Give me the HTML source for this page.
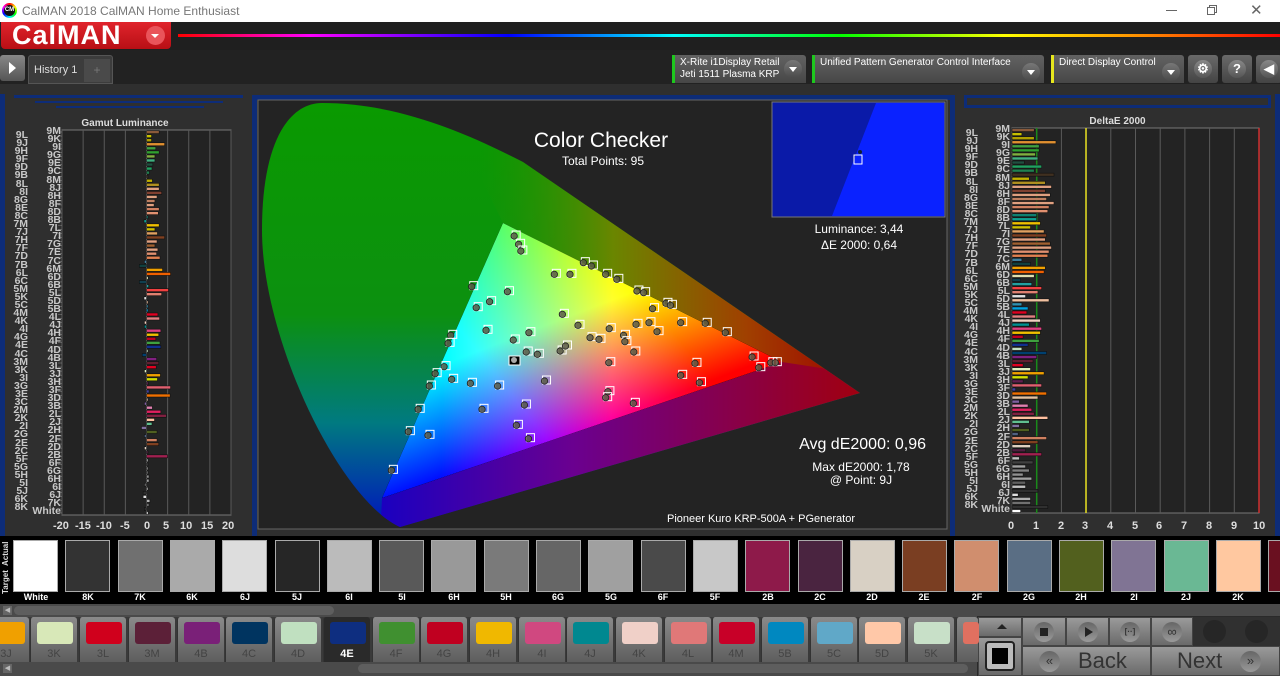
<!DOCTYPE html>
<html><head><meta charset="utf-8">
<style>
*{margin:0;padding:0;box-sizing:border-box}
body{width:1280px;height:676px;overflow:hidden;background:#2b2b2b;font-family:"Liberation Sans",sans-serif;position:relative}
.abs{position:absolute}
.dev{position:absolute;top:55px;height:28px;background:linear-gradient(#626262,#474747);border-radius:3px 3px 0 0;color:#fff;font-size:10px;line-height:12px;padding:2px 0 0 8px}
.dev .bar{position:absolute;left:0;top:0;bottom:0;width:3px}
.dd{position:absolute;right:4px;top:5px;width:18px;height:18px;border-radius:50%;background:linear-gradient(#777,#4a4a4a)}
.dd:after{content:"";position:absolute;left:5px;top:7px;border-left:4px solid transparent;border-right:4px solid transparent;border-top:5px solid #fff}
.ib{position:absolute;top:55px;width:30px;height:28px;background:linear-gradient(#6a6a6a,#444);border-radius:3px;color:#fff;font-weight:bold;text-align:center}
.ib i{position:absolute;left:6px;top:5px;width:18px;height:18px;border-radius:50%;background:linear-gradient(#888,#555);font-style:normal;font-size:13px;line-height:18px}
.lab{position:absolute;font-size:10.5px;font-weight:bold;color:#c8c8c8;line-height:8.1px;text-align:right;white-space:pre}
.sw{position:absolute;top:540px;width:45px;height:52px;border:1px solid #aaa}
.swl{position:absolute;top:592px;width:52px;text-align:center;color:#fff;font-size:9px;font-weight:bold}
.tab{position:absolute;top:617px;width:47px;height:45px;background:linear-gradient(#8a8a8a,#5e5e5e);border-radius:3px 3px 0 0;border-left:1px solid #333}
.tab b{position:absolute;left:6px;top:5px;width:36px;height:22px;border-radius:3px}
.tab span{position:absolute;left:0;right:0;top:31px;text-align:center;font-size:11px;color:#444}
.cb{position:absolute;background:linear-gradient(#9a9a9a,#6a6a6a);border:1px solid #444}
.cb i{position:absolute;left:50%;top:50%;width:20px;height:20px;margin:-10px 0 0 -10px;border-radius:50%;background:linear-gradient(#666,#9a9a9a)}
</style></head><body>
<!-- title bar -->
<div class="abs" style="left:0;top:0;width:1280px;height:22px;background:#fff"></div>
<div class="abs" style="left:2px;top:3px;width:15px;height:15px;border-radius:50%;background:conic-gradient(red,yellow,lime,cyan,blue,magenta,red)"></div>
<div class="abs" style="left:4px;top:5px;width:11px;height:11px;border-radius:50%;background:#111;color:#fff;font-size:6px;line-height:11px;text-align:center;font-weight:bold">CM</div>
<div class="abs" style="left:22px;top:4px;font-size:12px;color:#777">CalMAN 2018 CalMAN Home Enthusiast</div>
<div class="abs" style="left:1166px;top:10px;width:11px;height:1px;background:#666"></div>
<div class="abs" style="left:1209px;top:5px;width:8px;height:8px;border:1px solid #666"></div>
<div class="abs" style="left:1207px;top:7px;width:8px;height:8px;border:1px solid #666;background:#fff"></div>
<div class="abs" style="left:1250px;top:1px;font-size:15px;color:#666">✕</div>
<!-- header -->
<div class="abs" style="left:0;top:22px;width:1280px;height:28px;background:#1f1f1f"></div>
<div class="abs" style="left:1px;top:22px;width:170px;height:27px;background:linear-gradient(#e0242c,#b80f15);border-radius:0 0 4px 4px;color:#fff;font-size:27px;font-weight:bold;line-height:27px;padding-left:11px;letter-spacing:1px">CalMAN</div>
<div class="abs" style="left:146px;top:26px;width:19px;height:19px;border-radius:50%;background:#e9545a"></div>
<div class="abs" style="left:151px;top:34px;border-left:4px solid transparent;border-right:4px solid transparent;border-top:4px solid #fff"></div>
<div class="abs" style="left:178px;top:34px;width:1102px;height:3px;background:linear-gradient(90deg,#f00,#f0f 12%,#00f 30%,#0ff 45%,#0f0 60%,#ff0 75%,#f80 88%,#f00)"></div>
<div class="abs" style="left:0;top:50px;width:1280px;height:34px;background:#222"></div>
<div class="abs" style="left:0;top:55px;width:25px;height:26px;background:linear-gradient(#888,#555);border-radius:3px"></div>
<div class="abs" style="left:9px;top:62px;border-top:6px solid transparent;border-bottom:6px solid transparent;border-left:7px solid #fff"></div>
<div class="abs" style="left:28px;top:55px;width:85px;height:29px;background:#3c3c3c;border-radius:3px 3px 0 0;border:1px solid #555;color:#ddd;font-size:11px;padding:8px 0 0 5px">History 1</div>
<div class="abs" style="left:84px;top:59px;width:26px;height:23px;background:#4a4a4a;color:#777;font-size:12px;text-align:center;line-height:23px">+</div>
<div class="dev" style="left:672px;width:134px"><div class="bar" style="background:#1ec81e"></div>X-Rite i1Display Retail<br>Jeti 1511 Plasma KRP<div class="dd"></div></div>
<div class="dev" style="left:812px;width:232px"><div class="bar" style="background:#1ec81e"></div>Unified Pattern Generator Control Interface<div class="dd" style="top:8px"></div></div>
<div class="dev" style="left:1051px;width:133px"><div class="bar" style="background:#e6e61e"></div>Direct Display Control<div class="dd" style="top:8px"></div></div>
<div class="ib" style="left:1188px"><i>⚙</i></div>
<div class="ib" style="left:1222px"><i>?</i></div>
<div class="ib" style="left:1256px;width:26px"><i style="left:4px">◀</i></div>

<!-- main -->
<div class="abs" style="left:0;top:84px;width:1280px;height:452px;background:#2f2f2f"></div>
<div class="abs" style="left:0;top:94px;width:5px;height:442px;background:#0d2c78"></div>
<div class="abs" style="left:14px;top:95px;width:229px;height:3px;background:#0d2c78"></div>
<div class="abs" style="left:35px;top:101px;width:188px;height:2px;background:#0d2c78"></div>
<div class="abs" style="left:56px;top:106px;width:148px;height:2px;background:#0d2c78"></div>
<div class="abs" style="left:0;top:118px;width:240px;text-align:center;color:#ddd;font-size:10px;font-weight:bold;padding-left:10px">Gamut Luminance</div>
<div class="abs" style="left:1275px;top:94px;width:5px;height:442px;background:#0d2c78"></div>
<div class="abs" style="left:964px;top:95px;width:307px;height:13px;border:3px solid #0d2c78"></div>
<div class="abs" style="left:955px;top:116px;width:325px;text-align:center;color:#ddd;font-size:10px;font-weight:bold">DeltaE 2000</div>
<svg id="lc" class="abs" style="left:0;top:0" width="250" height="536"></svg>
<svg id="rc" class="abs" style="left:0;top:0" width="1280" height="536"></svg>

<div class="lab" style="left:0;top:127px;width:61px">9M
9K
9I
9G
9E
9C
8M
8J
8H
8F
8D
8B
7L
7I
7G
7E
7C
6M
6D
6B
5L
5D
5B
4L
4J
4H
4F
4D
4B
3L
3J
3H
3F
3D
3B
2L
2J
2H
2F
2D
2B
6F
6G
6H
6I
6J
7K
White</div>
<div class="lab" style="left:0;top:131px;width:28px">9L
9J
9H
9F
9D
9B
8L
8I
8G
8E
8C
7M
7J
7H
7F
7D
7B
6L
6C
5M
5K
5C
4M
4K
4I
4G
4E
4C
3M
3K
3I
3G
3E
3C
2M
2K
2I
2G
2E
2C
5F
5G
5H
5I
5J
6K
8K</div>
<div class="lab" style="left:955px;top:125px;width:55px">9M
9K
9I
9G
9E
9C
8M
8J
8H
8F
8D
8B
7L
7I
7G
7E
7C
6M
6D
6B
5L
5D
5B
4L
4J
4H
4F
4D
4B
3L
3J
3H
3F
3D
3B
2L
2J
2H
2F
2D
2B
6F
6G
6H
6I
6J
7K
White</div>
<div class="lab" style="left:955px;top:129px;width:23px">9L
9J
9H
9F
9D
9B
8L
8I
8G
8E
8C
7M
7J
7H
7F
7D
7B
6L
6C
5M
5K
5C
4M
4K
4I
4G
4E
4C
3M
3K
3I
3G
3E
3C
2M
2K
2I
2G
2E
2C
5F
5G
5H
5I
5J
6K
8K</div>
<div class="abs" style="left:50px;top:520px;width:200px;font-size:11px;color:#ddd;font-weight:bold;word-spacing:0">
<span class="abs" style="left:3px">-20</span><span class="abs" style="left:25px">-15</span><span class="abs" style="left:46px">-10</span><span class="abs" style="left:70px">-5</span><span class="abs" style="left:94px">0</span><span class="abs" style="left:113px">5</span><span class="abs" style="left:130px">10</span><span class="abs" style="left:151px">15</span><span class="abs" style="left:172px">20</span></div>
<div class="abs" style="left:1008px;top:520px;font-size:11px;color:#ddd;font-weight:bold">
<span class="abs" style="left:0">0</span><span class="abs" style="left:25px">1</span><span class="abs" style="left:50px">2</span><span class="abs" style="left:74px">3</span><span class="abs" style="left:99px">4</span><span class="abs" style="left:124px">5</span><span class="abs" style="left:148px">6</span><span class="abs" style="left:173px">7</span><span class="abs" style="left:198px">8</span><span class="abs" style="left:223px">9</span><span class="abs" style="left:245px">10</span></div>

<!-- center chart -->
<div class="abs" style="left:252px;top:95px;width:703px;height:441px;border:5px solid #0d2c78;border-bottom:none"></div>
<svg class="abs" style="left:0;top:0" width="1280" height="536">
<defs>
<clipPath id="loc"><path d="M860,393 L400,527 C340,500 262,340 262,230 C262,140 290,103 322,103 C400,103 470,135 523,162 Z"/></clipPath>
<linearGradient id="gv" x1="0" y1="100" x2="0" y2="530" gradientUnits="userSpaceOnUse"><stop offset="0" stop-color="#0a9a00"/><stop offset="0.5" stop-color="#0c9010"/><stop offset="0.75" stop-color="#007a80"/><stop offset="1" stop-color="#0010c0"/></linearGradient>
<linearGradient id="gr" x1="480" y1="0" x2="860" y2="0" gradientUnits="userSpaceOnUse"><stop offset="0" stop-color="#2a9000" stop-opacity="0"/><stop offset="0.35" stop-color="#6a8600"/><stop offset="0.7" stop-color="#a04000"/><stop offset="1" stop-color="#a00000"/></linearGradient>
<linearGradient id="gb" x1="380" y1="0" x2="860" y2="0" gradientUnits="userSpaceOnUse"><stop offset="0" stop-color="#1a00c0"/><stop offset="0.4" stop-color="#6a0090"/><stop offset="1" stop-color="#a00010"/></linearGradient>
<linearGradient id="t1" x1="503" y1="223" x2="582" y2="430" gradientUnits="userSpaceOnUse"><stop offset="0" stop-color="#00ff00"/><stop offset="0.5" stop-color="#00ff00"/><stop offset="1" stop-color="#000"/></linearGradient>
<linearGradient id="t2" x1="782" y1="362" x2="442" y2="360" gradientUnits="userSpaceOnUse"><stop offset="0" stop-color="#ff0000"/><stop offset="0.5" stop-color="#ff0000"/><stop offset="1" stop-color="#000"/></linearGradient>
<linearGradient id="t3" x1="382" y1="498" x2="642" y2="292" gradientUnits="userSpaceOnUse"><stop offset="0" stop-color="#0000ff"/><stop offset="0.5" stop-color="#0000ff"/><stop offset="1" stop-color="#000"/></linearGradient>
</defs>
<rect x="258" y="100" width="689" height="429" fill="#232323" stroke="#666" stroke-width="1"/>
<g clip-path="url(#loc)">
<rect x="250" y="90" width="700" height="450" fill="url(#gv)"/>
<polygon points="440,95 900,95 900,400 782,362 503,223" fill="url(#gr)"/>
<polygon points="382,498 782,362 900,380 900,540 380,540" fill="url(#gb)"/>
</g>
<g style="isolation:isolate">
<polygon points="503,223 782,362 382,498" fill="#000"/>
<polygon points="503,223 782,362 382,498" fill="url(#t1)" style="mix-blend-mode:screen"/>
<polygon points="503,223 782,362 382,498" fill="url(#t2)" style="mix-blend-mode:screen"/>
<polygon points="503,223 782,362 382,498" fill="url(#t3)" style="mix-blend-mode:screen"/>
</g>
<rect x="772" y="102" width="173" height="115" fill="#0a1aa8" stroke="#777"/>
<polygon points="876,103 944,103 944,216 832,216" fill="#0a22ff"/>
<rect x="854" y="155" width="8" height="9" fill="none" stroke="#fff"/>
<circle cx="860" cy="152" r="2" fill="#123"/>
<g id="pts"></g>
<text x="601" y="147" fill="#fff" font-size="21" text-anchor="middle" font-family="Liberation Sans">Color Checker</text>
<text x="603" y="165" fill="#fff" font-size="12" text-anchor="middle" font-family="Liberation Sans">Total Points: 95</text>
<text x="859" y="233" fill="#fff" font-size="12" text-anchor="middle" font-family="Liberation Sans">Luminance: 3,44</text>
<text x="859" y="249" fill="#fff" font-size="12" text-anchor="middle" font-family="Liberation Sans">ΔE 2000: 0,64</text>
<text x="926" y="449" fill="#fff" font-size="16" text-anchor="end" font-family="Liberation Sans">Avg dE2000: 0,96</text>
<text x="861" y="471" fill="#fff" font-size="12" text-anchor="middle" font-family="Liberation Sans">Max dE2000: 1,78</text>
<text x="861" y="484" fill="#fff" font-size="12" text-anchor="middle" font-family="Liberation Sans">@ Point: 9J</text>
<text x="761" y="522" fill="#fff" font-size="11" text-anchor="middle" font-family="Liberation Sans">Pioneer Kuro KRP-500A + PGenerator</text>
</svg>

<!-- swatch strip -->
<div class="abs" style="left:0;top:536px;width:1280px;height:68px;background:#000"></div>
<div class="abs" style="left:1px;top:538px;width:11px;height:56px;color:#ddd;font-size:8px;font-weight:bold;writing-mode:vertical-rl;transform:rotate(180deg);text-align:left">Target&nbsp; Actual</div>
<div id="sws"></div>
<div class="abs" style="left:0;top:604px;width:1280px;height:13px;background:#4a4a4a"></div>
<div class="abs" style="left:14px;top:606px;width:320px;height:9px;border-radius:5px;background:#5e5e5e"></div>
<div class="abs" style="left:3px;top:606px;width:9px;height:9px;background:#666;color:#bbb;font-size:7px;line-height:9px;text-align:center">◀</div>
<!-- tabs -->
<div class="abs" style="left:0;top:617px;width:978px;height:59px;background:#3a3a3a"></div>
<div class="abs" style="left:0;top:662px;width:978px;height:14px;background:#4a4a4a"></div>
<div class="abs" style="left:358px;top:664px;width:610px;height:9px;border-radius:5px;background:#5e5e5e"></div>
<div class="abs" style="left:3px;top:664px;width:9px;height:9px;background:#666;color:#bbb;font-size:7px;line-height:9px;text-align:center">◀</div>
<!-- controls -->
<div class="abs" style="left:977px;top:616px;width:303px;height:60px;background:#2a2a2a"></div>
<div class="cb" style="left:978px;top:617px;width:44px;height:20px"><div class="abs" style="left:18px;top:6px;border-left:5px solid transparent;border-right:5px solid transparent;border-bottom:5px solid #222"></div></div>
<div class="cb" style="left:978px;top:637px;width:44px;height:39px"><div class="abs" style="left:6px;top:3px;width:30px;height:30px;border:2px solid #222;border-radius:4px;background:#bbb"></div><div class="abs" style="left:13px;top:10px;width:16px;height:16px;background:#000"></div></div>
<div class="cb" style="left:1022px;top:617px;width:44px;height:29px"><i></i><div class="abs" style="left:17px;top:10px;width:8px;height:8px;background:#222"></div></div>
<div class="cb" style="left:1066px;top:617px;width:43px;height:29px"><i></i><div class="abs" style="left:18px;top:9px;border-top:5px solid transparent;border-bottom:5px solid transparent;border-left:8px solid #222"></div></div>
<div class="cb" style="left:1109px;top:617px;width:42px;height:29px;font-size:8px;color:#333;text-align:center;line-height:27px"><i></i><span style="position:relative;font-weight:bold">[··]</span></div>
<div class="cb" style="left:1151px;top:617px;width:42px;height:29px;font-size:13px;color:#333;text-align:center;line-height:27px"><i></i><span style="position:relative">∞</span></div>
<div class="abs" style="left:1193px;top:617px;width:87px;height:29px;background:#303030"></div>
<div class="abs" style="left:1203px;top:620px;width:23px;height:23px;border-radius:50%;background:#262626"></div>
<div class="abs" style="left:1245px;top:620px;width:23px;height:23px;border-radius:50%;background:#262626"></div>
<div class="cb" style="left:1022px;top:646px;width:129px;height:30px;color:#333;font-size:22px;line-height:28px"><div class="abs" style="left:16px;top:4px;width:21px;height:21px;border-radius:50%;background:linear-gradient(#666,#999);font-size:13px;line-height:20px;text-align:center;color:#333">«</div><span class="abs" style="left:55px">Back</span></div>
<div class="cb" style="left:1151px;top:646px;width:129px;height:30px;color:#333;font-size:22px;line-height:28px"><span class="abs" style="left:25px">Next</span><div class="abs" style="left:88px;top:4px;width:21px;height:21px;border-radius:50%;background:linear-gradient(#666,#999);font-size:13px;line-height:20px;text-align:center;color:#333">»</div></div>

<script>
var rows=[["9M",.9,3,"#8a5a3a"],["9L",.4,1.2,"#c8c000"],["9K",.9,1.2,"#b0a000"],["9J",1.78,4.3,"#e09030"],["9I",1.1,2.2,"#40a040"],["9H",1.1,3,"#30a030"],["9G",.95,2,"#80b040"],["9F",1.05,2,"#40b080"],["9E",.5,1.5,"#205040"],["9D",1.2,1.3,"#20a060"],["9C",.9,.7,"#208050"],["9B",1.7,0,"#403020"],["8M",.7,1.4,"#c0b000"],["8L",1.35,3,"#b09020"],["8J",1.6,3,"#e0a080"],["8I",1.35,3.6,"#804030"],["8H",1.55,2.5,"#e0a080"],["8G",1.4,2,"#c08060"],["8F",1.7,1.8,"#e0a080"],["8E",1.5,3,"#d08060"],["8D",1.45,2.8,"#e09070"],["8C",1,0,"#108070"],["8B",1,-.6,"#10a090"],["7M",1.15,3,"#f0c000"],["7L",.75,2,"#d0c000"],["7J",1.3,2.6,"#e0a060"],["7I",1.4,4.3,"#804020"],["7H",1.35,2.5,"#e0a080"],["7G",1.55,2,"#a06030"],["7F",1.6,2.7,"#e0a080"],["7E",1.5,2.4,"#e09070"],["7D",1.45,3.2,"#e08050"],["7C",.4,-.5,"#4080a0"],["7B",.75,-1.7,"#104040"],["6M",1.35,3.8,"#f0a000"],["6L",1.3,5.7,"#f06000"],["6D",.9,.4,"#e0e0b0"],["6C",.35,-1.7,"#104050"],["6B",.8,.5,"#20a0a0"],["5M",1.2,5.2,"#f04040"],["5L",1.05,3.6,"#e08070"],["5K",.55,-.6,"#e0e0e0"],["5D",1.5,.3,"#f0c0a0"],["5C",.4,0,"#3090b0"],["5B",.65,0,"#00a0e0"],["4M",.6,2.7,"#e00020"],["4L",.95,3.1,"#e08080"],["4K",1.15,-.5,"#f0d0c0"],["4J",.7,-.5,"#009090"],["4I",1.2,3.4,"#e04080"],["4H",1.15,2.9,"#f0c000"],["4G",.45,2.2,"#c00020"],["4F",1.1,3.2,"#40a040"],["4E",.65,3.4,"#103090"],["4D",.4,0,"#c0e0c0"],["4C",1.4,-1,"#004070"],["4B",1,2.4,"#802080"],["3M",.85,2.9,"#602030"],["3L",.45,2.3,"#e00020"],["3K",.75,-.5,"#e0f0c0"],["3J",1.3,3.3,"#f0a000"],["3I",.65,2.6,"#d0e000"],["3H",.45,.4,"#602050"],["3G",1.2,5.7,"#e06070"],["3F",.15,.6,"#4040a0"],["3E",1.4,5.6,"#f07000"],["3D",1.05,.3,"#e0c0a0"],["3C",.3,-.5,"#8060a0"],["3B",.65,1.4,"#e080b0"],["2M",.8,3.4,"#e02060"],["2L",.9,4.7,"#802040"],["2K",1.45,1.9,"#ffc0a0"],["2J",.7,1.3,"#60c090"],["2I",.3,-1.2,"#8070a0"],["2H",.7,2.5,"#506020"],["2G",.25,-.5,"#506080"],["2F",1.4,2.5,"#d08060"],["2E",1.05,2.9,"#804020"],["2D",.75,-.5,"#e0d0c0"],["2C",.55,0,"#502040"],["2B",1.2,5,"#a02050"],["5F",.3,0,"#c0c0c0"],["6F",.85,.2,"#404040"],["5G",.55,0,"#a0a0a0"],["6G",.7,.3,"#808080"],["5H",.45,.6,"#909090"],["6H",.8,.6,"#a0a0a0"],["5I",.55,-.5,"#606060"],["6I",.55,.3,"#c0c0c0"],["5J",1.05,-.8,"#303030"],["6J",.25,-.8,"#e0e0e0"],["6K",.75,.8,"#b0b0b0"],["7K",.75,.6,"#707070"],["8K",1.45,-.5,"#303030"],["White",.35,0,"#ffffff"]];
var NS="http://www.w3.org/2000/svg";
function el(p,t,a){var e=document.createElementNS(NS,t);for(var k in a)e.setAttribute(k,a[k]);p.appendChild(e);return e;}
var lc=document.getElementById("lc"),rc=document.getElementById("rc");
el(lc,"rect",{x:62,y:130,width:169,height:385,fill:"#232323",stroke:"#777"});
for(var i=0;i<=8;i++){var x=62+i*169/8;el(lc,"line",{x1:x,y1:130,x2:x,y2:515,stroke:"#5a5a5a"});}
el(lc,"line",{x1:146.5,y1:130,x2:146.5,y2:515,stroke:"#888"});
for(var i=0;i<95;i++){var y=130+i*385/95;el(lc,"line",{x1:58,y1:y+2,x2:62,y2:y+2,stroke:"#888","stroke-width":.5});
var v=rows[i][2]*4.225;var x0=Math.min(146.5,146.5+v);var w=Math.max(Math.abs(v),1.5);
el(lc,"rect",{x:x0,y:y+.6,width:w,height:3,fill:rows[i][3],stroke:"#111","stroke-width":.6});}
el(rc,"rect",{x:1012,y:128,width:247,height:385,fill:"#232323",stroke:"#777"});
for(var i=1;i<=9;i++){var x=1012+i*24.7;el(rc,"line",{x1:x,y1:128,x2:x,y2:513,stroke:"#5a5a5a"});}
el(rc,"line",{x1:1036.7,y1:128,x2:1036.7,y2:513,stroke:"#1a8a1a","stroke-width":1.5});
el(rc,"line",{x1:1086,y1:128,x2:1086,y2:513,stroke:"#e8e020","stroke-width":1.5});
el(rc,"line",{x1:1259,y1:128,x2:1259,y2:513,stroke:"#d03030","stroke-width":1.5});
for(var i=0;i<95;i++){var y=128+i*385/95;
el(rc,"rect",{x:1012,y:y+.6,width:rows[i][1]*24.7,height:3,fill:rows[i][3],stroke:"#111","stroke-width":.6});}
var P=[[585,420],[595,445],[600,465],[740,500],[758,510],[675,535],[710,535],[790,535],[815,550],[860,585],[875,590],[490,572],[570,587],[530,617],[500,635],[895,638],[925,622],[935,628],[693,655],[728,688],[798,698],[858,685],[887,680],[958,680],[1013,682],[1058,710],[443,718],[437,742],[522,703],[618,710],[583,732],[755,725],[775,730],[830,718],[833,737],[905,707],[612,768],[637,775],[688,765],[700,750],[853,768],[797,800],[990,802],[1118,783],[1133,815],[1160,800],[1170,800],[958,838],[1000,860],[428,812],[408,833],[395,870],[445,850],[487,862],[548,870],[653,855],[795,887],[790,905],[852,922],[608,927],[513,940],[370,940],[348,1007],[392,1018],[590,988],[617,1028],[310,1123]];
var g=document.getElementById("pts");
P.forEach(function(p,k){var x=p[0]/2.24+255,y=p[1]/3+95;
el(g,"rect",{x:x-4,y:y-4,width:8,height:8,fill:"none",stroke:"#fff","stroke-width":1});
el(g,"circle",{cx:x-2,cy:y+1,r:3.2,fill:"rgba(90,90,70,0.85)",stroke:"#222","stroke-width":.8});});
el(g,"rect",{x:509,y:356,width:11,height:9,fill:"#000",stroke:"#fff"});
el(g,"circle",{cx:514,cy:360,r:3,fill:"#aaa"});
var S=[["White","#fff"],["8K","#333"],["7K","#707070"],["6K","#aaa"],["6J","#ddd"],["5J","#262626"],["6I","#bbb"],["5I","#595959"],["6H","#999"],["5H","#7a7a7a"],["6G","#666"],["5G","#a0a0a0"],["6F","#4a4a4a"],["5F","#c8c8c8"],["2B","#8e1a4a"],["2C","#4a2440"],["2D","#d8d0c4"],["2E","#7a3e22"],["2F","#d08e6e"],["2G","#5a6e84"],["2H","#52601e"],["2I","#807494"],["2J","#6ab894"],["2K","#ffc8a0"],["","#6a1020"]];
var sw=document.getElementById("sws"),h="";
S.forEach(function(s,i){var x=13+i*52.3;h+='<div class="sw" style="left:'+x+'px;background:'+s[1]+'"></div>';});
sw.innerHTML=h;
</script>
<div class="swl" style="left:10px">White</div><div class="swl" style="left:62px">8K</div><div class="swl" style="left:114px">7K</div><div class="swl" style="left:166px">6K</div><div class="swl" style="left:219px">6J</div><div class="swl" style="left:271px">5J</div><div class="swl" style="left:323px">6I</div><div class="swl" style="left:376px">5I</div><div class="swl" style="left:428px">6H</div><div class="swl" style="left:480px">5H</div><div class="swl" style="left:532px">6G</div><div class="swl" style="left:585px">5G</div><div class="swl" style="left:637px">6F</div><div class="swl" style="left:689px">5F</div><div class="swl" style="left:742px">2B</div><div class="swl" style="left:794px">2C</div><div class="swl" style="left:846px">2D</div><div class="swl" style="left:898px">2E</div><div class="swl" style="left:951px">2F</div><div class="swl" style="left:1003px">2G</div><div class="swl" style="left:1055px">2H</div><div class="swl" style="left:1108px">2I</div><div class="swl" style="left:1160px">2J</div><div class="swl" style="left:1212px">2K</div>
<div class="tab" style="left:-18px"><b style="background:#f0a000"></b><span>3J</span></div>
<div class="tab" style="left:30px"><b style="background:#d8e8b8"></b><span>3K</span></div>
<div class="tab" style="left:79px"><b style="background:#d0001c"></b><span>3L</span></div>
<div class="tab" style="left:128px"><b style="background:#5c2038"></b><span>3M</span></div>
<div class="tab" style="left:177px"><b style="background:#7a2078"></b><span>4B</span></div>
<div class="tab" style="left:225px"><b style="background:#003460"></b><span>4C</span></div>
<div class="tab" style="left:274px"><b style="background:#c0e0c0"></b><span>4D</span></div>
<div class="tab" style="left:323px;background:#2a2a2a"><b style="background:#0e2e80"></b><span style="color:#fff;font-weight:bold">4E</span></div>
<div class="tab" style="left:372px"><b style="background:#409030"></b><span>4F</span></div>
<div class="tab" style="left:420px"><b style="background:#c00020"></b><span>4G</span></div>
<div class="tab" style="left:469px"><b style="background:#f0b800"></b><span>4H</span></div>
<div class="tab" style="left:518px"><b style="background:#d04880"></b><span>4I</span></div>
<div class="tab" style="left:566px"><b style="background:#008890"></b><span>4J</span></div>
<div class="tab" style="left:615px"><b style="background:#f0d0c8"></b><span>4K</span></div>
<div class="tab" style="left:664px"><b style="background:#e07878"></b><span>4L</span></div>
<div class="tab" style="left:712px"><b style="background:#c80028"></b><span>4M</span></div>
<div class="tab" style="left:761px"><b style="background:#0088c0"></b><span>5B</span></div>
<div class="tab" style="left:810px"><b style="background:#60a8c8"></b><span>5C</span></div>
<div class="tab" style="left:858px"><b style="background:#ffc8a8"></b><span>5D</span></div>
<div class="tab" style="left:907px"><b style="background:#c8e0c8"></b><span>5K</span></div>
<div class="tab" style="left:956px;width:22px"><b style="background:#e07060;width:16px"></b></div>
</body></html>
